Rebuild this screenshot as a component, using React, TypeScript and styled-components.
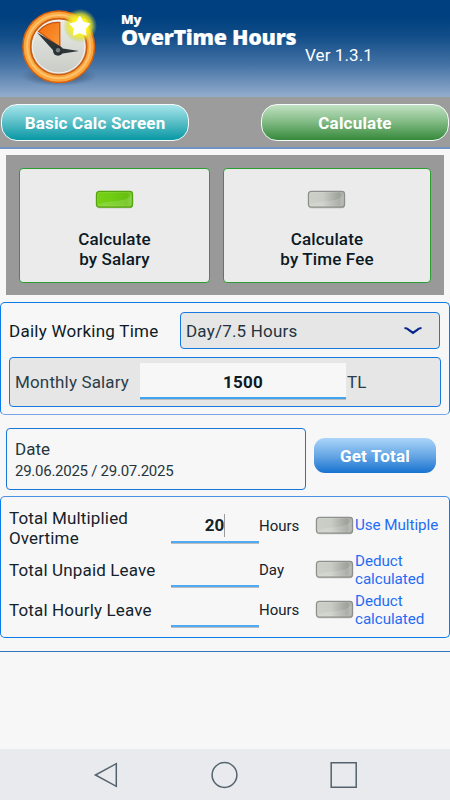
import React from "react";
import styled, { createGlobalStyle } from "styled-components";

const Global = createGlobalStyle`
  * { box-sizing: border-box; }
  body { margin: 0; background: #f7f7f7; }
`;

const Screen = styled.div`
  width: 450px;
  height: 800px;
  display: flex;
  flex-direction: column;
  overflow: hidden;
  background: #f7f7f7;
  color: #14222c;
  font-family: Roboto, "Liberation Sans", sans-serif;
  font-size: 17px;
  line-height: 20px;
  white-space: nowrap;
`;

const Header = styled.header`
  height: 97px;
  flex: none;
  display: flex;
  color: #fff;
  background: linear-gradient(#004080 0, #004080 17px, #114d88 36px, #4674a6 66px, #94adcd 97px);
`;

const Logo = styled.svg`
  display: block;
  width: 90px;
  height: 90px;
  margin-left: 15px;
`;

const Brand = styled.div`
  margin: 10px 0 0 16px;
  width: 180px;
  font-family: "Noto Sans", "Open Sans", sans-serif;
  font-weight: 900;
  -webkit-text-stroke: 0.15px #fff;
`;

const BrandSmall = styled.div`
  font-size: 13px;
  line-height: 18px;
`;

const BrandName = styled.div`
  font-size: 21.5px;
  line-height: 18px;
  letter-spacing: -0.3px;
`;

const Version = styled.div`
  margin: 45px 0 0 4px;
  letter-spacing: 0.1px;
`;

const Toolbar = styled.div`
  height: 52px;
  flex: none;
  display: flex;
  justify-content: space-between;
  padding: 6.5px 1px 0;
  background: #9c9c9c;
  border-bottom: 2px solid #7094c6;
`;

const PillButton = styled.button<{ $tone: "teal" | "green" }>`
  width: 188px;
  height: 37.5px;
  padding: 2px 0 0;
  border: 1.5px solid #f5fafa;
  border-radius: 16px;
  color: #fff;
  font: 700 17px Roboto, sans-serif;
  letter-spacing: 0.2px;
  background: ${(p) =>
    p.$tone === "teal"
      ? "linear-gradient(#a6e5ec, #59bec6 50%, #0798a4)"
      : "linear-gradient(#c1e1c3, #7fb982 50%, #36893b)"};
`;

const ModePanel = styled.section`
  margin: 6px 6px 0;
  height: 140px;
  flex: none;
  display: grid;
  grid-template-columns: 191px 208px;
  column-gap: 13px;
  padding: 12.5px 13px 12px;
  background: #999;
`;

const ModeCard = styled.div`
  display: flex;
  flex-direction: column;
  align-items: center;
  padding-top: 20px;
  border: 1px solid #2b9d32;
  border-radius: 4px;
  background: #ebebeb;
  color: #0c1a24;
  font-weight: 500;
  text-align: center;
  line-height: 20.5px;
  letter-spacing: 0.13px;
`;

const Lamp = styled.svg`
  display: block;
  width: 40px;
  height: 22px;
  flex: none;
`;

const CardLabel = styled.div`
  margin-top: 18px;
`;

const SalarySection = styled.section`
  margin-top: 7px;
  height: 113px;
  flex: none;
  padding: 9px 8px;
  border: 1px solid #0b7be8;
  border-bottom-color: #78a5ea;
  border-radius: 5px;
`;

const TimeRow = styled.div`
  display: flex;
  align-items: center;
  justify-content: space-between;
  color: #0c1a24;
  letter-spacing: 0.25px;
`;

const Select = styled.div`
  display: flex;
  align-items: center;
  justify-content: space-between;
  width: 260px;
  height: 37px;
  margin-right: 1px;
  padding: 0 16px 0 5px;
  border: 1px solid #1579df;
  border-radius: 4px;
  background: #e6e6e6;
  color: #223440;
  letter-spacing: 0.2px;
`;

const SalaryRow = styled.div`
  display: flex;
  width: 432px;
  height: 50px;
  margin-top: 8px;
  padding: 5px 0 0 5px;
  border: 1px solid #1579df;
  border-radius: 4px;
  background: #e6e6e6;
  color: #2b3d49;
`;

const SalaryLabel = styled.div`
  width: 125px;
  padding-top: 9px;
  letter-spacing: 0.15px;
`;

const SalaryInput = styled.div`
  width: 206px;
  height: 37px;
  padding-top: 9px;
  background: linear-gradient(#f7f7f7 34px, #41a4ee 34px, #41a4ee 36px, #bcbcbc 36px);
  color: #0c1a24;
  font-weight: 700;
  text-align: center;
  letter-spacing: 0.2px;
`;

const Currency = styled.div`
  padding: 9px 0 0 1px;
`;

const DateRow = styled.div`
  display: flex;
  gap: 8px;
  margin: 13px 0 0 6px;
  flex: none;
`;

const DateBox = styled.div`
  width: 300px;
  height: 62px;
  padding: 10px 8px;
  border: 1px solid #1877d6;
  border-radius: 4px;
  color: #263640;
`;

const DateRange = styled.div`
  margin-top: 3px;
  font-size: 15px;
  line-height: 19px;
  letter-spacing: -0.26px;
`;

const TotalButton = styled.button`
  width: 122px;
  height: 35px;
  margin-top: 10px;
  padding: 1px 0 0;
  border: 0;
  border-radius: 11px;
  color: #fff;
  font: 700 17px Roboto, sans-serif;
  letter-spacing: 0.2px;
  background: linear-gradient(#abd5fa, #68a7e5 50%, #1773cf);
`;

const TotalsSection = styled.section`
  margin-top: 6px;
  height: 142px;
  flex: none;
  padding: 8px 0 0 8px;
  border: 1px solid #0b7be8;
  border-top-color: #4891e5;
  border-radius: 5px;
`;

const TotalRow = styled.div<{ $height: number; $lift: number }>`
  display: grid;
  grid-template-columns: 162px 88px 56px 40px 1fr;
  height: ${(p) => p.$height}px;
  align-items: center;

  > :not(:first-child) {
    margin-bottom: ${(p) => p.$lift}px;
  }
`;

const TotalLabel = styled.div`
  letter-spacing: 0.15px;
`;

const Field = styled.div`
  display: flex;
  justify-content: center;
  align-items: center;
  align-self: end;
  height: 37px;
  padding-bottom: 1px;
  background: linear-gradient(transparent 34px, #50aaf4 34px, #50aaf4 36px, #bdbdbd 36px);
  font-weight: 700;
`;

const Caret = styled.span`
  width: 1px;
  height: 23px;
  background: #9a9a9a;
`;

const Unit = styled.div`
  padding-top: 2px;
  font-size: 15px;
`;

const LampSlot = styled.div`
  padding-top: 2px;
`;

const Option = styled.div`
  padding-top: 3px;
  color: #1f6cf5;
  font-size: 15.2px;
  line-height: 17.5px;
  letter-spacing: -0.05px;
`;

const Divider = styled.div`
  height: 1px;
  margin-top: 13px;
  flex: none;
  background: #2f77c2;
`;

const NavBar = styled.nav`
  height: 51px;
  flex: none;
  margin-top: auto;
  display: flex;
  justify-content: space-between;
  padding: 11.5px 93px 0;
  background: #e9eaee;
`;

const NavIcon = styled.svg`
  width: 28px;
  height: 28px;
  fill: none;
  stroke: #53626c;
  stroke-width: 1.5;
`;

function ClockLogo() {
  return (
    <Logo viewBox="0 0 90 90">
      <defs>
        <linearGradient id="face" x2="0" y2="1">
          <stop offset="0" stopColor="#e9ebe7" />
          <stop offset="1" stopColor="#c9ccc5" />
        </linearGradient>
        <linearGradient id="wedge" x2="1" y2="1">
          <stop offset="0" stopColor="#f36c08" />
          <stop offset="1" stopColor="#fb9a3c" />
        </linearGradient>
        <radialGradient id="glow">
          <stop offset="0.45" stopColor="#fff31a" />
          <stop offset="0.7" stopColor="#e8e52a" stopOpacity="0.75" />
          <stop offset="1" stopColor="#b8c840" stopOpacity="0" />
        </radialGradient>
        <radialGradient id="ground">
          <stop offset="0.5" stopColor="#324e70" stopOpacity="0.55" />
          <stop offset="1" stopColor="#324e70" stopOpacity="0" />
        </radialGradient>
      </defs>
      <ellipse cx="44" cy="76" rx="38" ry="10" fill="url(#ground)" />
      <circle cx="43.7" cy="46.7" r="35.8" fill="#fba63c" stroke="#d9600c" strokeWidth="1.5" />
      <circle cx="43.7" cy="46.7" r="31.6" fill="none" stroke="#ffc36d" strokeWidth="2" />
      <circle cx="43.7" cy="46.7" r="28" fill="url(#face)" stroke="#cc5d14" strokeWidth="1.7" />
      <circle cx="43.7" cy="46.7" r="26.2" fill="none" stroke="#f2f3f0" strokeWidth="1" />
      <path d="M44.8 47V22.5C36 22 28.5 25.7 23.5 31.5Z" fill="url(#wedge)" stroke="#c9520b" strokeWidth="1.2" />
      <path d="M22 32.5 45.5 46.5 40.5 53 Z" fill="#2e3537" />
      <path d="M64 51 43 54.3 43 47.8 Z" fill="#2e3537" />
      <circle cx="43" cy="50.7" r="5" fill="#2b3235" />
      <circle cx="43" cy="50.2" r="2.2" fill="#767e80" />
      <circle cx="65" cy="25.8" r="17" fill="url(#glow)" />
      <path
        d="M64.8 16.5 68.1 22.4 74.5 23.8 70.1 28.6 70.8 35 64.8 32.4 58.7 35 59.4 28.6 55.1 23.8 61.5 22.4Z"
        fill="#fff"
        stroke="#fff"
        strokeWidth="1.3"
        strokeLinejoin="round"
      />
    </Logo>
  );
}

function StatusLamp({ on = false }: { on?: boolean }) {
  const id = on ? "lamp-on" : "lamp-off";
  return (
    <Lamp viewBox="0 0 40 22">
      <defs>
        <linearGradient id={id}>
          <stop offset="0" stopColor={on ? "#76d016" : "#cdd0c8"} />
          <stop offset="0.4" stopColor={on ? "#70cd13" : "#c9ccc4"} />
          <stop offset="0.85" stopColor={on ? "#66bf10" : "#9fa19b"} />
          <stop offset="1" stopColor={on ? "#78cf2a" : "#b4b7b0"} />
        </linearGradient>
      </defs>
      <rect x="0.9" y="2.1" width="37.2" height="17.3" rx="3.6" fill="#000" opacity="0.13" />
      <rect x="1.5" y="2.4" width="36" height="15.8" rx="2.8" fill={`url(#${id})`} stroke={on ? "#55a30d" : "#8d8f8a"} strokeWidth="1.3" />
      <path
        d="M3 15.5C15.5 10 28.5 15 36 6V15Q36 17 33.5 17H5.5Q3 17 3 15.5Z"
        fill="#fff"
        opacity="0.15"
      />
      <rect x="2.7" y="3.6" width="33.6" height="13.4" rx="2" fill="none" stroke="#fff" strokeOpacity="0.15" strokeWidth="0.8" />
    </Lamp>
  );
}

export default function App() {
  return (
    <Screen>
      <Global />
      <Header>
        <ClockLogo />
        <Brand>
          <BrandSmall>My</BrandSmall>
          <BrandName>OverTime Hours</BrandName>
        </Brand>
        <Version>Ver 1.3.1</Version>
      </Header>
      <Toolbar>
        <PillButton $tone="teal">Basic Calc Screen</PillButton>
        <PillButton $tone="green">Calculate</PillButton>
      </Toolbar>
      <ModePanel>
        <ModeCard>
          <StatusLamp on />
          <CardLabel>Calculate<br />by Salary</CardLabel>
        </ModeCard>
        <ModeCard>
          <StatusLamp />
          <CardLabel>Calculate<br />by Time Fee</CardLabel>
        </ModeCard>
      </ModePanel>
      <SalarySection>
        <TimeRow>
          Daily Working Time
          <Select>
            Day/7.5 Hours
            <svg width="20" height="10" viewBox="0 0 20 10" fill="none" stroke="#08278c" strokeWidth="2.2">
              <path d="M1.5 2 Q4.5 2.2 6.2 4.2L10 7 13.8 4.2Q15.5 2.2 18.5 2" />
            </svg>
          </Select>
        </TimeRow>
        <SalaryRow>
          <SalaryLabel>Monthly Salary</SalaryLabel>
          <SalaryInput>1500</SalaryInput>
          <Currency>TL</Currency>
        </SalaryRow>
      </SalarySection>
      <DateRow>
        <DateBox>
          Date
          <DateRange>29.06.2025 / 29.07.2025</DateRange>
        </DateBox>
        <TotalButton>Get Total</TotalButton>
      </DateRow>
      <TotalsSection>
        <TotalRow $height={45} $lift={6}>
          <TotalLabel>Total Multiplied<br />Overtime</TotalLabel>
          <Field>20<Caret /></Field>
          <Unit>Hours</Unit>
          <LampSlot><StatusLamp /></LampSlot>
          <Option>Use Multiple</Option>
        </TotalRow>
        <TotalRow $height={40} $lift={2}>
          <TotalLabel>Total Unpaid Leave</TotalLabel>
          <Field />
          <Unit>Day</Unit>
          <LampSlot><StatusLamp /></LampSlot>
          <Option>Deduct<br />calculated</Option>
        </TotalRow>
        <TotalRow $height={40} $lift={2}>
          <TotalLabel>Total Hourly Leave</TotalLabel>
          <Field />
          <Unit>Hours</Unit>
          <LampSlot><StatusLamp /></LampSlot>
          <Option>Deduct<br />calculated</Option>
        </TotalRow>
      </TotalsSection>
      <Divider />
      <NavBar>
        <NavIcon viewBox="0 0 28 28"><path d="M23.3 2.7V25.3L2.4 14Z" /></NavIcon>
        <NavIcon viewBox="0 0 28 28"><circle cx="13.5" cy="14" r="12.4" /></NavIcon>
        <NavIcon viewBox="0 0 28 28"><path d="M2.2 1.8H27.2V26.3H2.2Z" /></NavIcon>
      </NavBar>
    </Screen>
  );
}
